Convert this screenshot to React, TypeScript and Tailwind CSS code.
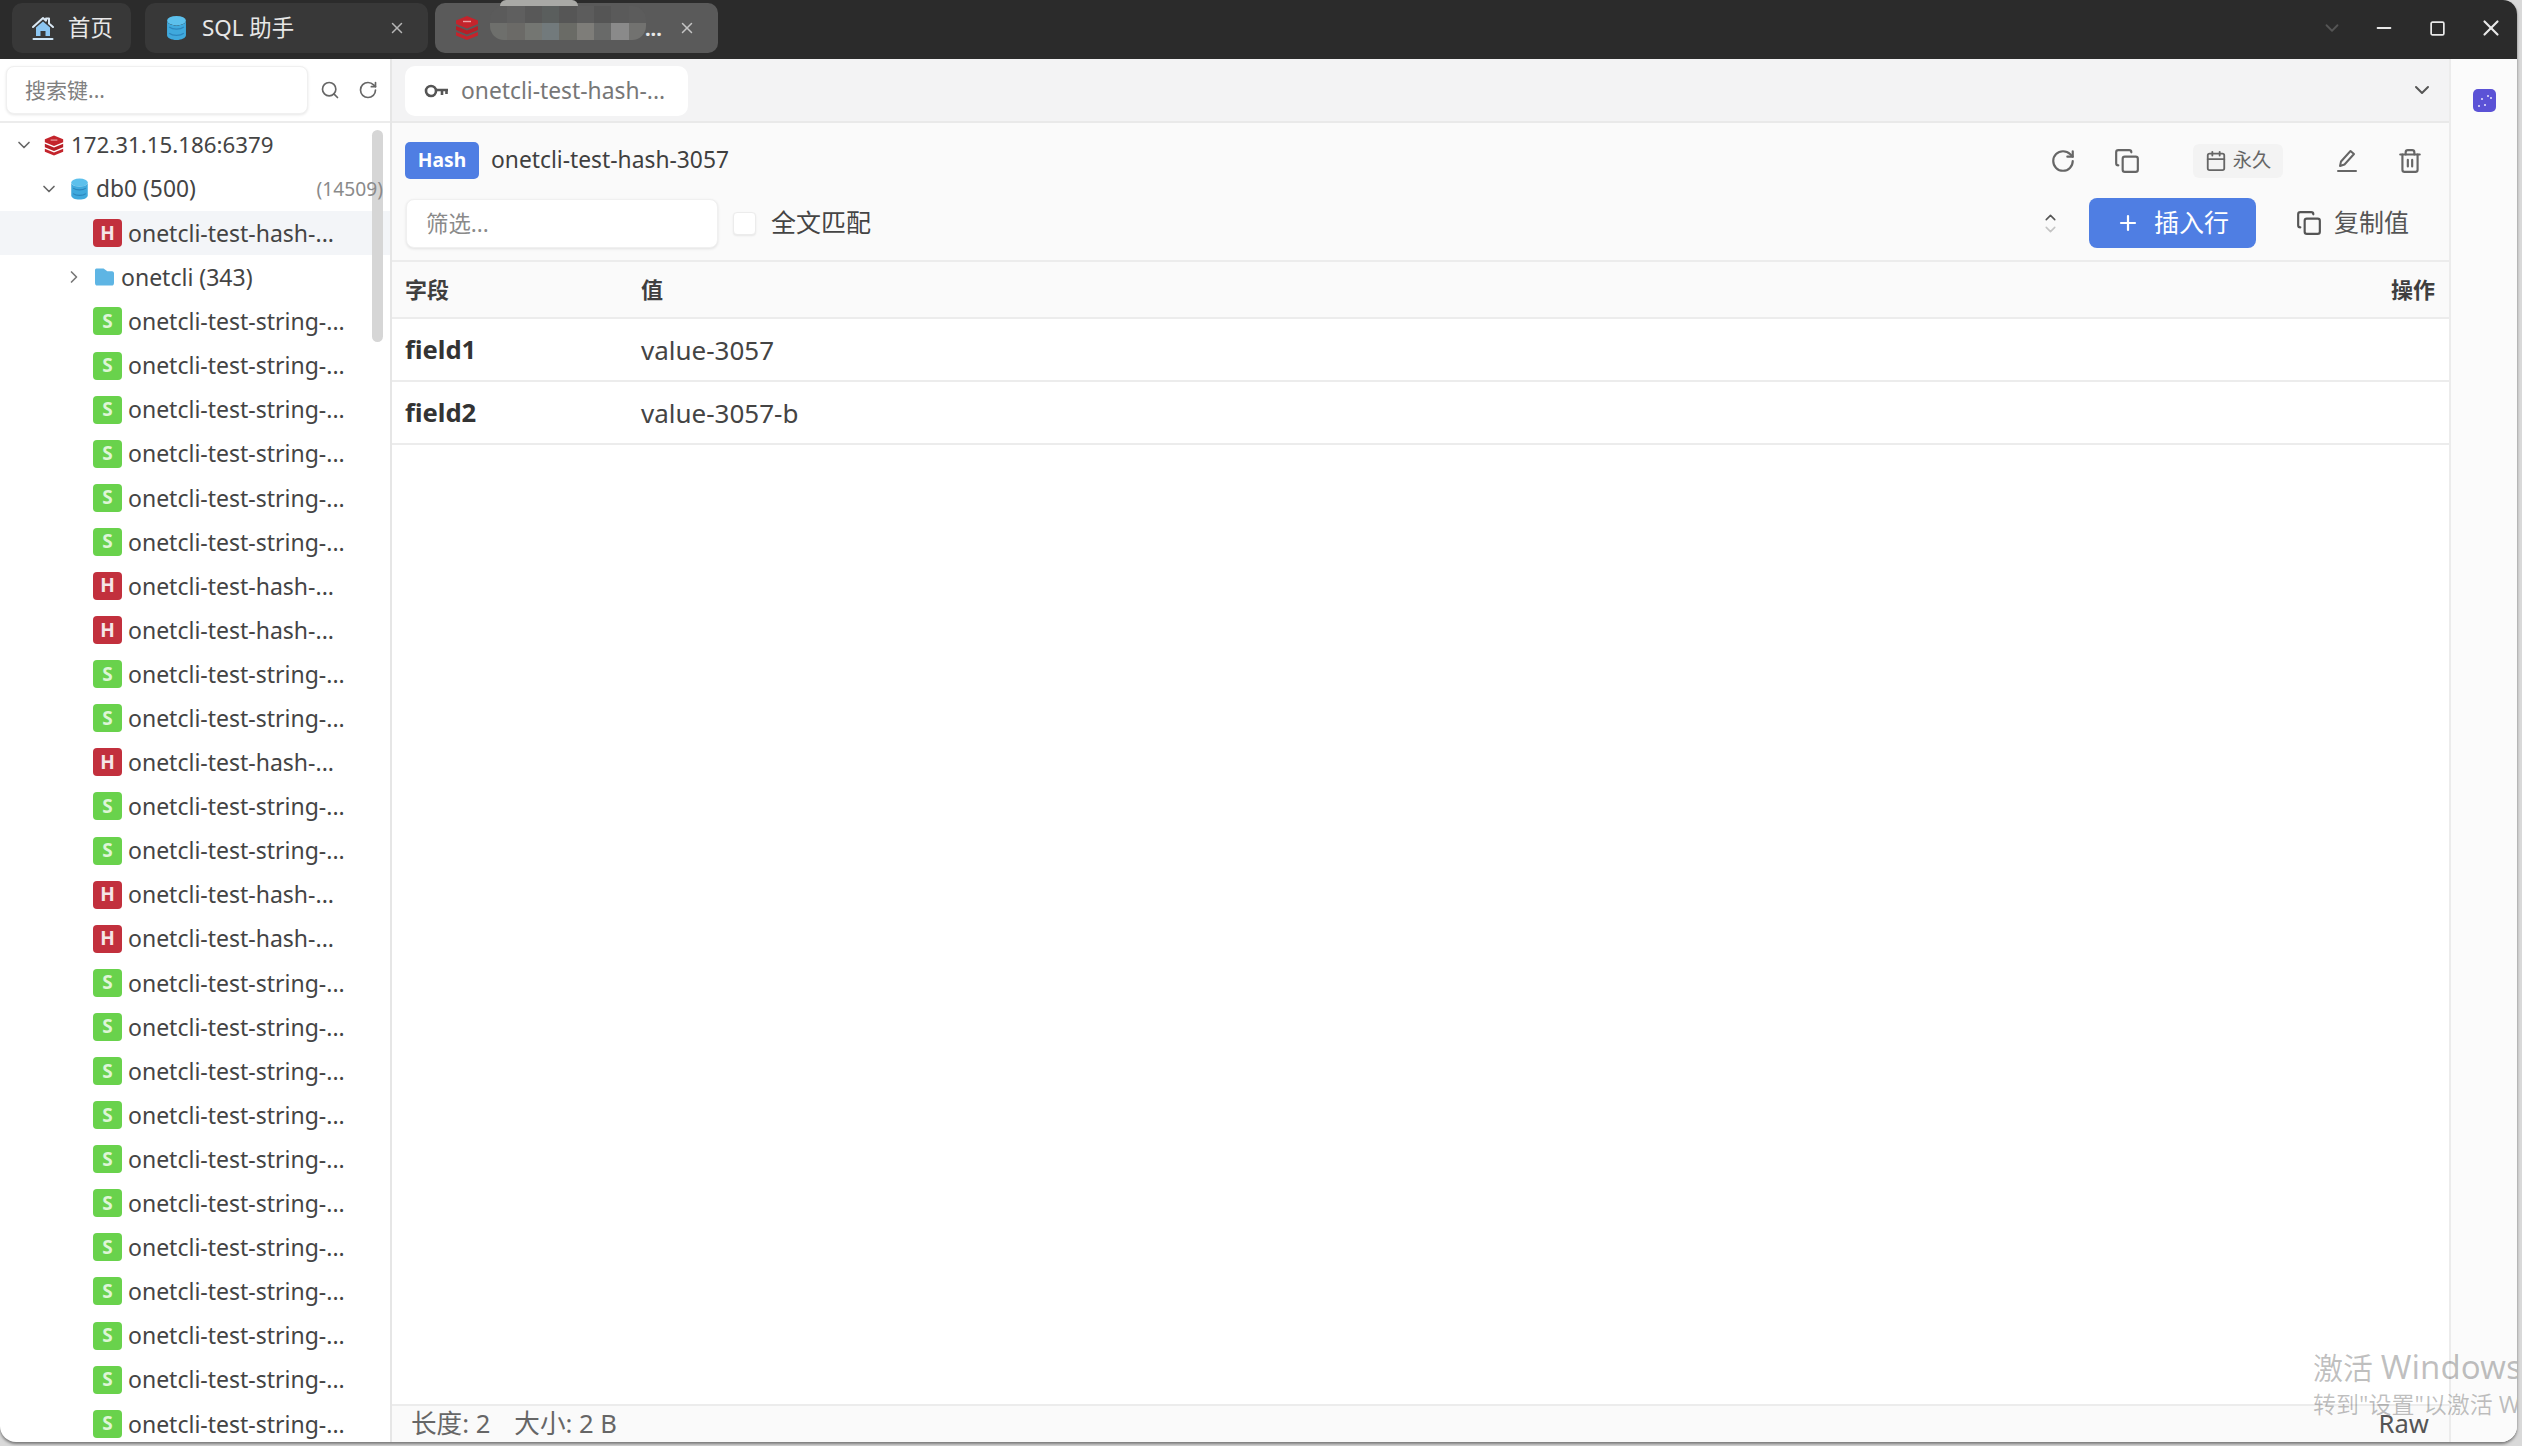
import React from "react";
import { ChevronDown, ChevronRight, ChevronUp, Copy, Calendar, Plus, RotateCw, Search, Trash2, X, Minus, Square } from "lucide-react";

type Row = "H" | "S";
const keys: Row[] = ["S","S","S","S","S","S","H","H","S","S","H","S","S","H","H","S","S","S","S","S","S","S","S","S","S","S"];

const mosaicTop = ["bg-[#5b5b5b]","bg-[#5f5f5f]","bg-[#585858]","bg-[#5a5e5d]","bg-[#565656]","bg-[#5c5c5c]","bg-[#555555]","bg-[#5a5a5a]","bg-[#5c5c5c]"];
const mosaicBottom = ["bg-[#6e6f6c]","bg-[#6b6a67]","bg-[#747672]","bg-[#727a7c]","bg-[#6a6b66]","bg-[#7e7d79]","bg-[#696a69]","bg-[#8a8a8a]","bg-[#727270]"];

function DbIcon({ className }: { className: string }) {
  return (
    <svg viewBox="0 0 20 24" className={className}>
      <ellipse cx="10" cy="5" rx="9" ry="4.5" fill="#5cc0ec" />
      <path d="M1 5v14c0 2.5 4 4.5 9 4.5s9-2 9-4.5V5c0 2.5-4 4.5-9 4.5S1 7.500 1 5Z" fill="#3fa9dd" />
      <path d="M3 11c2 1.500 4.500 2 7 2s5-.5 7-2M3 17c2 1.500 4.500 2 7 2s5-.5 7-2" stroke="#2c86bd" strokeWidth="1.200" fill="none" />
    </svg>
  );
}

function RedisIcon({ className }: { className: string }) {
  return (
    <svg viewBox="0 0 24 24" className={className}>
      <path d="M12 0 23 4.500V8L12 12.500 1 8V4.500Z" fill="#c4242c" />
      <path d="M1 10l11 4.500L23 10v4l-11 4.500L1 14Z" fill="#b71e26" />
      <path d="M1 16l11 4.500L23 16v3.500L12 24 1 19.500Z" fill="#c4242c" />
      <path d="M8 5.500h8" stroke="#eaa3a7" strokeWidth="1.400" />
    </svg>
  );
}

function HomeIcon() {
  return (
    <svg viewBox="0 0 24 26" className="h-[26px] w-[24px]">
      <path d="M2 12 12 3l3 2.700V3.500h3v5L22 12" fill="none" stroke="#dbe9f5" strokeWidth="2" strokeLinecap="round" strokeLinejoin="round" />
      <path d="M5 12.500 12 6.500l7 6V21h-4.500v-5h-5v5H5Z" fill="#8cc6f2" />
      <path d="M2.500 24h19" stroke="#cfe5f6" strokeWidth="2" strokeLinecap="round" />
    </svg>
  );
}

function KeyIcon() {
  return (
    <svg viewBox="0 0 26 16" className="h-[16px] w-[26px]" fill="none" stroke="#555555" strokeWidth="2.600">
      <circle cx="7" cy="8" r="5" />
      <path d="M12 7h12M18 7v5M22.500 7v4" />
    </svg>
  );
}

function PenIcon() {
  return (
    <svg viewBox="0 0 24 24" className="h-[27px] w-[24px]" fill="none" stroke="#666666" strokeWidth="2" strokeLinejoin="round" strokeLinecap="round">
      <path d="M5 17.500 6 13 15.500 2.500l3.500 3L9.500 16Z" />
      <path d="M3 22.500h18" />
    </svg>
  );
}

function Badge({ kind }: { kind: Row }) {
  return kind === "H" ? (
    <span className="flex h-[28px] w-[29px] shrink-0 items-center justify-center rounded-[4px] bg-[#c2303d] text-[19px] font-bold leading-none text-[#f5e6e7]">H</span>
  ) : (
    <span className="flex h-[28px] w-[29px] shrink-0 items-center justify-center rounded-[4px] bg-[#69d24c] text-[19px] font-bold leading-none text-[#dff5d6]">S</span>
  );
}

function KeyRow({ kind, active }: { kind: Row; active?: boolean }) {
  return (
    <div className={`flex h-[44.100px] items-center pl-[93px] ${active ? "bg-[#f3f5f8]" : ""}`}>
      <Badge kind={kind} />
      <span className="ml-[6px] whitespace-nowrap text-[23px] text-[#444444]">{kind === "H" ? "onetcli-test-hash-..." : "onetcli-test-string-..."}</span>
    </div>
  );
}

export default function App() {
  return (
    <div className="relative h-[1446px] w-[2522px] overflow-hidden bg-[#d9d9d9] font-['Noto_Sans','Noto_Sans_CJK_SC',sans-serif]">
      <div className="relative flex h-[1442px] w-[2517px] flex-col overflow-hidden rounded-b-[16px] rounded-tr-[14px] bg-white shadow-[0_2px_3px_#777777]">
        {/* title bar */}
        <div className="flex h-[59px] shrink-0 items-start bg-[#2b2b2b] pl-[12px] pt-[3px]">
          <div className="flex h-[50px] w-[119px] items-center rounded-[10px] bg-[#383838] pl-[19px] text-[22.400px] text-[#e8e8e8]">
            <HomeIcon />
            <span className="ml-[13px]">首页</span>
          </div>
          <div className="ml-[14px] flex h-[50px] w-[283px] items-center rounded-[10px] bg-[#383838] pl-[21px] text-[22.400px] text-[#e8e8e8]">
            <DbIcon className="h-[26px] w-[21px]" />
            <span className="ml-[15px]">SQL 助手</span>
            <X className="ml-auto mr-[22px] text-[#b5b5b5]" size={18} strokeWidth={2} />
          </div>
          <div className="relative ml-[7px] flex h-[50px] w-[283px] items-center rounded-[10px] bg-[#5a5a5a] pl-[20px] text-[22.400px] text-[#e8e8e8]">
            <RedisIcon className="h-[26px] w-[24px]" />
            <span className="absolute left-[210px] top-[14px] text-[20px] font-bold leading-[24px]">...</span>
            <X className="ml-auto mr-[22px] text-[#c4c4c4]" size={18} strokeWidth={2} />
            <div className="absolute left-[55px] top-[3px] grid h-[34px] w-[156px] grid-cols-9 overflow-hidden rounded-[14px]">
              {mosaicTop.map((c, i) => <div key={i} className={c} />)}
              {mosaicBottom.map((c, i) => <div key={i} className={c} />)}
            </div>
            <div className="absolute left-[65px] top-[-3px] h-[6px] w-[78px] rounded-t-[6px] bg-[#a9a9a6]" />
          </div>
          <div className="ml-auto flex h-[50px] items-center text-[#e8e8e8]">
            <span className="flex w-[53px] justify-center"><ChevronDown className="text-[#555555]" size={22} /></span>
            <span className="flex w-[53px] justify-center pr-[2px]"><Minus size={22} strokeWidth={2} /></span>
            <span className="flex w-[53px] justify-center"><Square size={17} strokeWidth={2.400} /></span>
            <span className="flex w-[53px] justify-center"><X size={26} strokeWidth={2} /></span>
          </div>
        </div>

        <div className="flex min-h-0 flex-1">
          {/* sidebar */}
          <aside className="relative flex w-[392px] shrink-0 flex-col border-r-2 border-[#e6e6e6]">
            <div className="flex h-[64px] shrink-0 items-center border-b-2 border-[#ececec] pl-[6px]">
              <input
                placeholder="搜索键..."
                className="h-[48px] w-[302px] rounded-[8px] border border-[#f0f0f0] bg-white pl-[18px] text-[21px] shadow-[0_1px_3px_rgba(0,0,0,0.1)] outline-none placeholder:text-[#808080]"
              />
              <Search className="ml-[12px] text-[#666666]" size={20} strokeWidth={2} />
              <RotateCw className="ml-[18px] text-[#666666]" size={20} strokeWidth={2} />
            </div>
            <div className="min-h-0 flex-1 overflow-hidden">
              <div className="flex h-[44.100px] items-center pl-[14px]">
                <ChevronDown className="text-[#666666]" size={20} />
                <RedisIcon className="ml-[10px] h-[21px] w-[20px]" />
                <span className="ml-[7px] whitespace-nowrap text-[22.300px] text-[#444444]">172.31.15.186:6379</span>
              </div>
              <div className="flex h-[44.100px] items-center pl-[39px] pr-[7px]">
                <ChevronDown className="text-[#666666]" size={20} />
                <DbIcon className="ml-[11px] h-[22px] w-[19px]" />
                <span className="ml-[7px] whitespace-nowrap text-[22.800px] text-[#444444]">db0 (500)</span>
                <span className="relative z-10 ml-auto text-[19.200px] text-[#8a8a8a]">(14509)</span>
              </div>
              <KeyRow kind="H" active />
              <div className="flex h-[44.100px] items-center pl-[64px]">
                <ChevronRight className="text-[#777777]" size={20} />
                <svg viewBox="0 0 20 18" className="ml-[11px] h-[18px] w-[19px]">
                  <path d="M0 2C0 1 .5 0 1.500 0H9l4 3h5c1 0 2 1 2 2v10c0 2-1 3-2.500 3h-15C1 18 0 17 0 15Z" fill="#5eb5e4" />
                </svg>
                <span className="ml-[7px] whitespace-nowrap text-[23px] text-[#444444]">onetcli (343)</span>
              </div>
              {keys.map((k, i) => <KeyRow key={i} kind={k} />)}
            </div>
            <div className="absolute left-[372px] top-[71px] h-[212px] w-[11px] rounded-full bg-[#d6d6d6]" />
          </aside>

          {/* main */}
          <main className="flex min-w-0 flex-1 flex-col">
            <div className="flex h-[64px] shrink-0 items-start border-b-2 border-[#e9e9e9] bg-[#f3f3f4] pl-[13px] pt-[7px] pr-[15px]">
              <div className="flex h-[50px] w-[283px] items-center rounded-[10px] bg-white pl-[19px] text-[22.800px] text-[#777777]">
                <KeyIcon />
                <span className="ml-[11px] whitespace-nowrap">onetcli-test-hash-...</span>
              </div>
              <ChevronDown className="ml-auto mt-[12px] text-[#555555]" size={24} strokeWidth={2} />
            </div>

            <div className="flex h-[139px] shrink-0 flex-col border-b-2 border-[#ececec] bg-[#fafafa]">
              <div className="flex h-[75px] shrink-0 items-center pl-[13px] pr-[26px]">
                <span className="flex h-[37px] w-[74px] items-center justify-center rounded-[5px] bg-[#4f7ee3] text-[19.200px] font-bold text-white">Hash</span>
                <span className="ml-[12px] whitespace-nowrap text-[22.800px] text-[#3f3f3f]">onetcli-test-hash-3057</span>
                <span className="ml-auto flex w-[26px] justify-center"><RotateCw className="text-[#666666]" size={26} strokeWidth={2} /></span>
                <span className="ml-[38px] flex w-[26px] justify-center"><Copy className="text-[#666666]" size={26} strokeWidth={2} /></span>
                <span className="ml-[53px] flex h-[34px] w-[90px] items-center justify-center rounded-[6px] bg-[#f3f3f3] text-[19.200px] text-[#666666]">
                  <Calendar size={22} strokeWidth={2} />
                  <span className="ml-[6px]">永久</span>
                </span>
                <span className="ml-[51px] flex w-[26px] justify-center"><PenIcon /></span>
                <span className="ml-[37px] flex w-[26px] justify-center"><Trash2 className="text-[#666666]" size={26} strokeWidth={2} /></span>
              </div>
              <div className="flex items-center pl-[14px] pr-[40px]">
                <input
                  placeholder="筛选..."
                  className="h-[49px] w-[312px] rounded-[8px] border border-[#f0f0f0] bg-white pl-[19px] text-[22.400px] shadow-[0_1px_3px_rgba(0,0,0,0.1)] outline-none placeholder:text-[#8a8a8a]"
                />
                <span className="ml-[15px] h-[23px] w-[23px] rounded-[4px] border border-[#ececec] bg-white shadow-[0_1px_2px_rgba(0,0,0,0.08)]" />
                <span className="ml-[15px] text-[25px] text-[#444444]">全文匹配</span>
                <span className="ml-auto flex w-[20px] flex-col items-center">
                  <ChevronUp className="-mb-[5px] text-[#555555]" size={17} strokeWidth={2.200} />
                  <ChevronDown className="text-[#c4c4c4]" size={17} strokeWidth={2.200} />
                </span>
                <button className="ml-[28px] flex h-[50px] w-[167px] items-center justify-center rounded-[8px] bg-[#4f7ee3] text-[25px] text-white">
                  <Plus size={24} strokeWidth={2.200} />
                  <span className="ml-[14px]">插入行</span>
                </button>
                <span className="ml-[40px] flex items-center text-[25px] text-[#555555]">
                  <Copy size={26} strokeWidth={2} />
                  <span className="ml-[12px]">复制值</span>
                </span>
              </div>
            </div>

            <div className="flex h-[57px] shrink-0 items-center border-b-2 border-[#ececec] bg-[#fafafa] pb-[1px] pl-[13px] pr-[14px] text-[22px] font-bold text-[#3f3f3f]">
              <span className="w-[236px]">字段</span>
              <span>值</span>
              <span className="ml-auto">操作</span>
            </div>
            {[["field1", "value-3057"], ["field2", "value-3057-b"]].map(([f, v]) => (
              <div key={f} className="flex h-[63px] shrink-0 items-center border-b-2 border-[#ececec] pl-[13px] pt-[2px] text-[26px] text-[#444444]">
                <span className="w-[236px] text-[25.600px] font-bold text-[#333333]">{f}</span>
                <span>{v}</span>
              </div>
            ))}
            <div className="min-h-0 flex-1" />
            <div className="flex h-[38px] shrink-0 items-center border-t-2 border-[#ececec] bg-[#fafafa] pl-[19px] pr-[20px] text-[25.600px] text-[#666666]">
              <span>长度: 2</span>
              <span className="ml-[24px]">大小: 2 B</span>
              <span className="ml-auto text-[#555555]">Raw</span>
            </div>
          </main>

          {/* right rail */}
          <div className="flex w-[68px] shrink-0 justify-center border-l-2 border-[#ececec] bg-[#fbfbfb] pt-[30px]">
            <svg viewBox="0 0 23 23" className="h-[23px] w-[23px]">
              <rect width="23" height="23" rx="5" fill="#5b52d6" />
              <circle cx="15" cy="7" r="1" fill="#e8e6fb" />
              <circle cx="9" cy="10" r="1" fill="#e8e6fb" />
              <circle cx="12" cy="16" r="1" fill="#e8e6fb" />
              <circle cx="6" cy="17" r="1" fill="#e8e6fb" />
              <circle cx="18" cy="9" r="1" fill="#e8e6fb" />
            </svg>
          </div>
        </div>

        {/* windows watermark */}
        <div className="pointer-events-none absolute left-[2313px] top-[1346px] whitespace-nowrap text-black/25">
          <div className="text-[30px] leading-[42px]">激活 <span className="text-[33px]">Windows</span></div>
          <div className="text-[23px] leading-[30px]">转到"设置"以激活 Windows</div>
        </div>
      </div>
    </div>
  );
}
